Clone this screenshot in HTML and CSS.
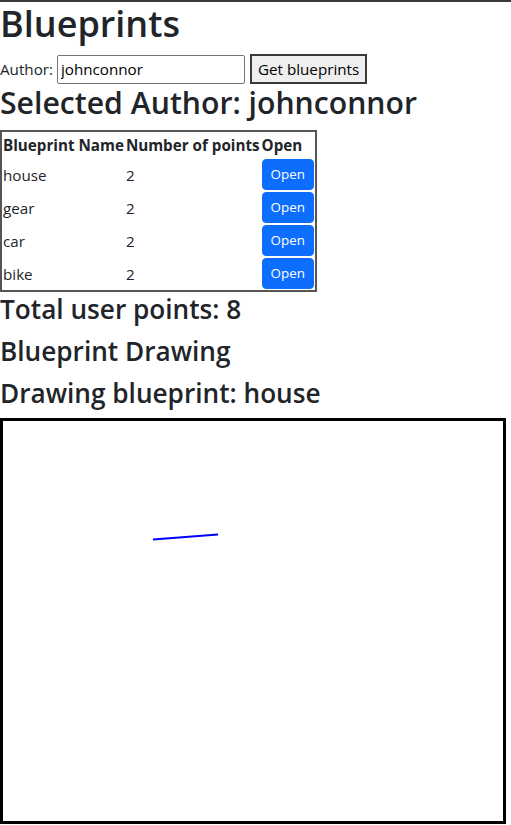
FILE: index.html
```html
<!DOCTYPE html>
<html lang="en">
<head>
<meta charset="utf-8">
<title>Blueprints</title>
<link rel="stylesheet" href="styles.css">
</head>
<body>
<div class="topbar"></div>
<h1 class="title">Blueprints</h1>
<div class="form-row">
  <label class="author-label" for="author">Author:</label>
  <input id="author" class="author-input" type="text" value="johnconnor">
  <button class="get-btn" type="button">Get blueprints</button>
</div>
<h2 class="selected">Selected Author: johnconnor</h2>
<table class="bp-table">
  <thead>
    <tr><th>Blueprint Name</th><th>Number of points</th><th>Open</th></tr>
  </thead>
  <tbody>
    <tr><td>house</td><td>2</td><td><button class="open-btn" type="button">Open</button></td></tr>
    <tr><td>gear</td><td>2</td><td><button class="open-btn" type="button">Open</button></td></tr>
    <tr><td>car</td><td>2</td><td><button class="open-btn" type="button">Open</button></td></tr>
    <tr><td>bike</td><td>2</td><td><button class="open-btn" type="button">Open</button></td></tr>
  </tbody>
</table>
<h3 class="sub">Total user points: 8</h3>
<h3 class="sub">Blueprint Drawing</h3>
<h3 class="sub">Drawing blueprint: house</h3>
<div class="canvas-wrap">
  <svg class="canvas" width="500" height="400" viewBox="0 0 500 400">
    <line x1="150" y1="118.5" x2="215" y2="113.5" stroke="#0000ff" stroke-width="2"/>
  </svg>
</div>
</body>
</html>
```
FILE: styles.css
```css
* { box-sizing: border-box; }
html, body {
  margin: 0;
  padding: 0;
  background: #fff;
}
body {
  font-family: "Open Sans", "Noto Sans", sans-serif;
  font-size: 15.2px;
  line-height: 24px;
  color: #212529;
}
.topbar {
  height: 2px;
  background: #383c40;
}
.title, .selected, .sub {
  margin: 0 0 8px 0;
  font-weight: 600;
}
.title {
  font-size: 36px;
  line-height: 44px;
  margin-bottom: 8px;
}
.form-row {
  display: flex;
  align-items: center;
  height: 30px;
}
.author-label {
  margin-right: 4px;
}
.author-input {
  width: 188px;
  height: 29px;
  border: 1px solid #767676;
  border-radius: 2px;
  padding: 1px 3px;
  font: inherit;
  color: #000;
  margin-right: 5px;
}
.get-btn {
  font: inherit;
  color: #000;
  background: #efefef;
  border: 2px solid #3a3a3a;
  padding: 0 6px;
  height: 30px;
  line-height: 24px;
}
.selected {
  font-size: 30.2px;
  line-height: 38px;
  margin-bottom: 8px;
}
.bp-table {
  border-collapse: collapse;
  border: 2px solid #555;
}
.bp-table th, .bp-table td {
  padding: 1px;
  text-align: left;
  vertical-align: middle;
}
.bp-table th { font-weight: 700; }
.open-btn {
  display: block;
  font: inherit;
  font-size: 13.4px;
  line-height: 21px;
  color: #fff;
  background: #0d6efd;
  border: 1px solid #0d6efd;
  border-radius: 4px;
  padding: 4px 8px;
}
.sub {
  font-size: 26.2px;
  line-height: 34px;
}
.canvas {
  display: block;
  border: 3px solid #000;
  width: 506px;
  height: 406px;
  background: #fff;
}
```
